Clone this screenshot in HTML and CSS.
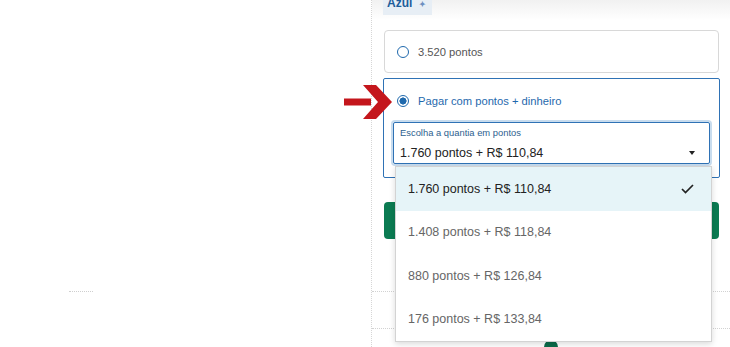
FILE: index.html
```html
<!DOCTYPE html>
<html>
<head>
  <title>Pagamento com pontos</title>
  <link rel="stylesheet" href="styles.css">
</head>
<body>
  <div class="page">
    <div class="left">
      <div class="left-rule"></div>
    </div>

    <div class="right">
      <div class="top-bar">
        <span class="chip">Azul <span class="chip-icon">&#10022;</span></span>
      </div>

      <div class="options">
        <label class="card">
          <span class="radio"></span>
          <span class="card-text">3.520 pontos</span>
        </label>

        <div class="card card-selected">
          <div class="card-row">
            <span class="radio radio-on"></span>
            <span class="card-text">Pagar com pontos + dinheiro</span>
          </div>
          <div class="select">
            <div class="select-label">Escolha a quantia em pontos</div>
            <div class="select-value">
              <span>1.760 pontos + R$ 110,84</span>
              <span class="caret"></span>
            </div>
          </div>
        </div>

        <button class="btn-green" type="button"></button>
      </div>

      <div class="rule rule-one"></div>
      <div class="rule rule-two"></div>
      <div class="dot"></div>

      <ul class="dropdown">
        <li class="item item-active">
          <span>1.760 pontos + R$ 110,84</span>
          <svg class="check" width="13" height="10" viewBox="0 0 13 10"><path d="M1 5l3.5 3.5L12 1" fill="none" stroke="#222" stroke-width="1.7"/></svg>
        </li>
        <li class="item">1.408 pontos + R$ 118,84</li>
        <li class="item">880 pontos + R$ 126,84</li>
        <li class="item">176 pontos + R$ 133,84</li>
      </ul>

      <svg class="arrow" width="50" height="34" viewBox="0 0 50 34">
        <polygon points="0,13.5 27,13.5 27,20.5 0,20.5" fill="#c4161c"/>
        <polygon points="19,0 32,0 48,17 32,34 19,34 34,17" fill="#c4161c"/>
      </svg>
    </div>
  </div>
</body>
</html>
```

FILE: styles.css
```css
body {
  margin: 0;
  background-color: #fff;
  font-family: "Liberation Sans", Arial, sans-serif;
  overflow: hidden;
}

.page {
  display: flex;
  width: 730px;
  height: 347px;
}

.left {
  width: 371px;
  border-right: 1px dotted #d6d6d6;
}

.left-rule {
  margin: 291px 0 0 69px;
  width: 24px;
  border-top: 1px dotted #cfcfcf;
}

.right {
  flex: 1;
  position: relative;
}

.top-bar {
  height: 20px;
  padding-left: 11px;
  background: linear-gradient(to bottom, #f1f1f1, #fff);
}

.chip {
  display: inline-block;
  margin-top: -5px;
  padding: 0 6px 2px 4px;
  background-color: #e7eef5;
  color: #1d5d9b;
  font-size: 12px;
  font-weight: bold;
  line-height: 16px;
  vertical-align: top;
}

.chip-icon {
  font-size: 8px;
  color: #6c8fc0;
  margin-left: 3px;
}

.options {
  padding: 10px 11px 0 12px;
}

.card {
  display: flex;
  align-items: center;
  height: 41px;
  border: 1px solid #d8d8d8;
  border-radius: 4px;
  padding-left: 12px;
}

.card-text {
  font-size: 11.2px;
  color: #555;
  margin-left: 9px;
}

.radio {
  width: 10px;
  height: 10px;
  border: 1.7px solid #1f69ad;
  border-radius: 50%;
  box-sizing: content-box;
}

.radio-on {
  background: radial-gradient(circle, #1f69ad 0 3.3px, #fff 3.8px);
}

.card-selected {
  display: block;
  height: 98px;
  margin: 5px -1px 0 -1px;
  border: 1.5px solid #2f72b5;
  border-radius: 2px;
  padding: 0 9px 0 9px;
}

.card-row {
  display: flex;
  align-items: center;
  height: 43px;
  padding-left: 4px;
}

.card-selected .card-text {
  color: #1f69ad;
}

.select {
  height: 40px;
  border: 1.5px solid #2f72b5;
  border-radius: 2px;
  box-shadow: 0 0 0 2px #c8dcee;
  padding: 0 14px 0 6px;
}

.select-label {
  font-size: 9.4px;
  color: #2d5f8f;
  margin-top: 4px;
}

.select-value {
  display: flex;
  justify-content: space-between;
  align-items: center;
  font-size: 12.5px;
  color: #222;
  margin-top: 8px;
}

.caret {
  width: 0;
  height: 0;
  border-left: 3px solid transparent;
  border-right: 3px solid transparent;
  border-top: 4px solid #222;
}

.btn-green {
  display: block;
  width: 100%;
  height: 37px;
  margin-top: 24px;
  border: none;
  border-radius: 4px;
  background-color: #0b7b52;
}

.rule {
  position: absolute;
  left: 0;
  right: 0;
  border-top: 1px dotted #d2d2d2;
}

.rule-one {
  top: 291px;
}

.rule-two {
  top: 328px;
}

.dot {
  position: absolute;
  left: 172px;
  top: 340px;
  width: 14px;
  height: 14px;
  border-radius: 50%;
  background-color: #0b6b4a;
}

.dropdown {
  position: absolute;
  left: 23px;
  top: 166px;
  width: 315px;
  margin: 0;
  padding: 0;
  list-style: none;
  background-color: #fff;
  border: 1px solid #d3d3d3;
  box-shadow: 0 2px 6px rgba(0, 0, 0, 0.15);
}

.item {
  display: flex;
  justify-content: space-between;
  align-items: center;
  height: 43.5px;
  padding: 0 17px 0 12px;
  font-size: 12.5px;
  color: #666;
}

.item-active {
  background-color: #e6f4f8;
  color: #222;
}

.arrow {
  position: absolute;
  left: -28px;
  top: 85px;
}
```
